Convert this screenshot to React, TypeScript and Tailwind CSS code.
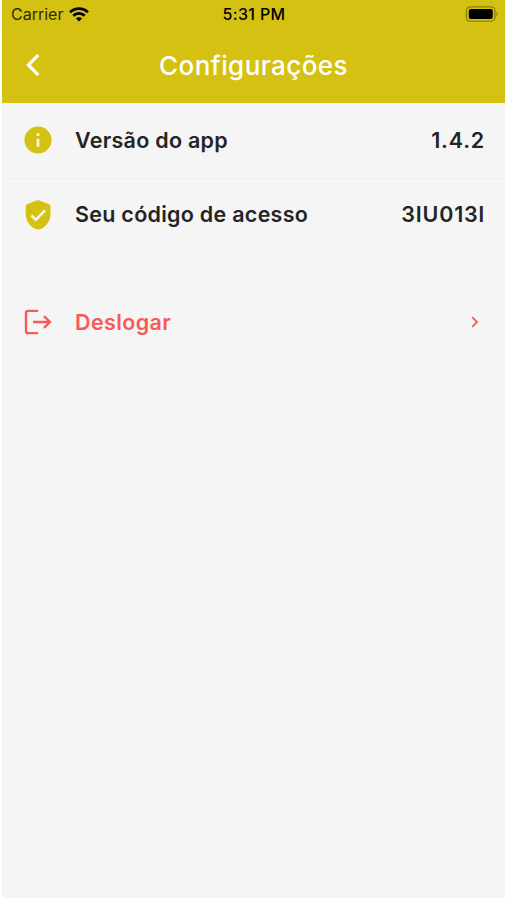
import type { ReactNode } from 'react';

function StatusBar() {
  return (
    <div className="grid h-7 grid-cols-3 items-center pr-[7px] pl-[9px] text-black">
      <div className="flex items-center gap-[6px]">
        <span className="text-[16px] leading-7 text-[#2f2b08]">Carrier</span>
        <svg width="20" height="15" viewBox="0 0 20 15" fill="none" stroke="currentColor" strokeWidth="2.7">
          <path d="M1.1 5.4a12.6 12.6 0 0 1 17.8 0" />
          <path d="M4.3 8.8a8 8 0 0 1 11.4 0" />
          <path d="M10 14.6 6.9 11.5a4.4 4.4 0 0 1 6.2 0Z" fill="currentColor" stroke="none" />
        </svg>
      </div>
      <span className="-ml-px text-center text-[16px] leading-7 font-medium tracking-[0.35px] whitespace-nowrap text-black">5:31 PM</span>
      <svg className="justify-self-end" width="33" height="16" viewBox="0 0 33 16">
        <rect x="1.4" y="0.8" width="28.6" height="14.4" rx="4" fill="none" stroke="#8b800d" strokeWidth="1.3" />
        <rect x="3.8" y="3" width="24" height="10" rx="2" fill="#000" />
        <path d="M31.5 5.5c1.6.7 1.6 4.3 0 5Z" fill="#8b800d" />
      </svg>
    </div>
  );
}

function Row({ icon, label, value }: { icon: ReactNode; label: string; value: string }) {
  return (
    <div className="flex items-center border-b border-[#efefef] pr-5 pl-5 text-[#242424]">
      {icon}
      <span className="ml-[21px] flex-1 text-[21.5px] font-semibold tracking-[0.27px]">{label}</span>
      <span className="text-[21.5px] font-semibold tracking-[0.8px]">{value}</span>
    </div>
  );
}

export default function App() {
  return (
    <div className="h-[900px] w-[507px] bg-white px-0.5 pb-0.5 font-['Inter','Liberation_Sans',sans-serif]">
      <main className="flex h-full flex-col bg-[#f5f5f5]">
        <header className="h-[102.5px] bg-[#d5c111]">
          <StatusBar />
          <div className="grid h-[74px] grid-cols-[60px_1fr_60px] items-center">
            <svg className="ml-[23px]" width="18" height="24" viewBox="0 0 18 24" fill="none" stroke="#fff" strokeWidth="3.2">
              <path d="M13.2 2.2 3.4 12l9.8 9.8" />
            </svg>
            <h1 className="text-center text-[26px] font-medium tracking-[0.42px] text-white">Configurações</h1>
          </div>
        </header>
        <section className="grid grid-rows-[76px_73px]">
          <Row
            icon={
              <svg width="32" height="32" viewBox="0 0 24 24" fill="#d5c111">
                <path d="M12 1.8C6.400 1.800 1.800 6.400 1.800 12s4.600 10.200 10.200 10.200 10.200-4.600 10.200-10.200S17.600 1.800 12 1.800zm1 15.200h-2v-6h2v6zm0-8h-2V7h2v2z" />
              </svg>
            }
            label="Versão do app"
            value="1.4.2"
          />
          <Row
            icon={
              <svg width="32" height="32" viewBox="0 0 24 24">
                <path d="M11 1.100Q12 .7 13 1.100L20.400 3.900Q21.400 4.300 21.400 5.400V11C21.400 16.700 18 20.400 14.500 22.300Q12.100 23.500 9.700 22.300C6.200 20.400 2.800 16.700 2.800 11V5.400Q2.800 4.300 3.800 3.900Z" fill="#d5c111" />
                <path d="m7.100 12.300 3.300 3.300 6.900-7" fill="none" stroke="#f5f5f5" strokeWidth="1.900" />
              </svg>
            }
            label="Seu código de acesso"
            value="3IU013l"
          />
        </section>
        <button className="mt-[38px] flex h-16 items-center pr-[26px] pl-5 text-left text-[#f65b58]">
          <svg width="32" height="32" viewBox="0 0 32 32" fill="none" stroke="currentColor" strokeWidth="2.4">
            <path d="M16 4.900H6.200Q4 4.900 4 7.100V24.900Q4 27.100 6.200 27.100H16" />
            <path d="M11 16H28M22 10.200 28 16l-6 5.800" />
          </svg>
          <span className="ml-[21px] flex-1 pt-px text-[21.5px] font-semibold tracking-[0.4px]">Deslogar</span>
          <svg width="9" height="14" viewBox="0 0 9 14" fill="none" stroke="currentColor" strokeWidth="1.8">
            <path d="m2.200 2.200 4.800 4.800-4.800 4.800" />
          </svg>
        </button>
      </main>
    </div>
  );
}
